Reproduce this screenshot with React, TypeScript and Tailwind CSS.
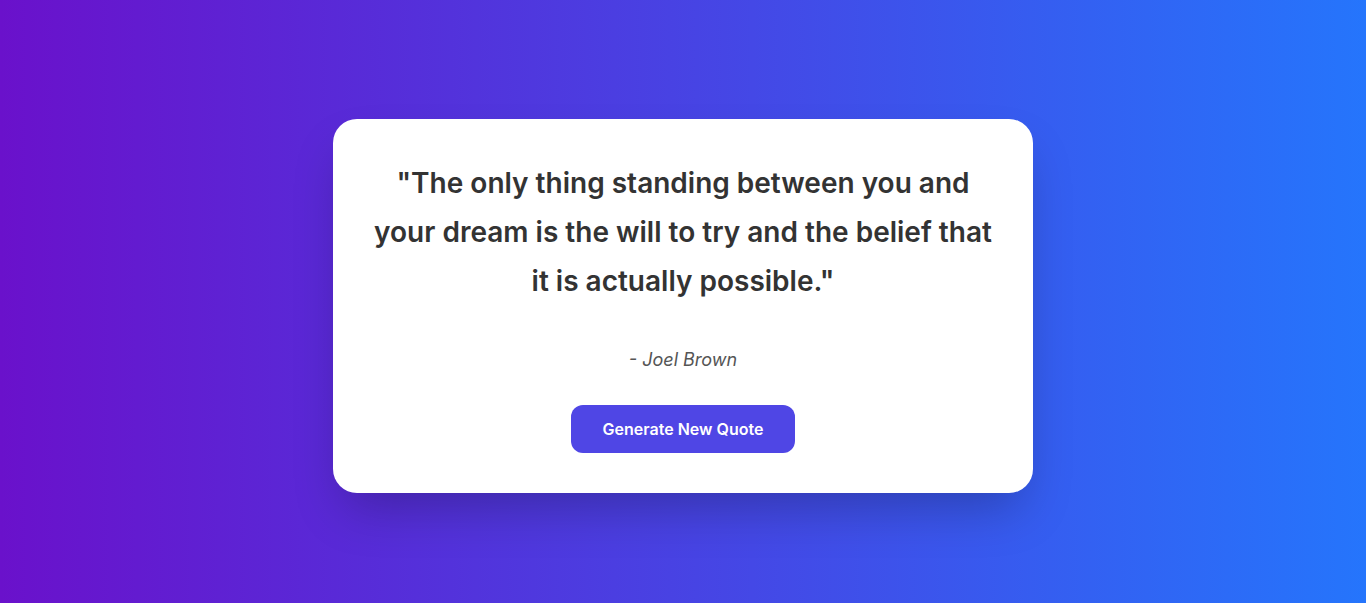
export default function App() {
  return (
    <div className="min-h-screen w-full flex items-center justify-center pt-[8px] bg-[linear-gradient(to_right,#6a11cb,#2575fc)] font-['Inter','Noto_Sans',sans-serif]">
      <div className="w-[700px] bg-white rounded-3xl shadow-2xl px-10 pt-10 pb-10 flex flex-col items-center text-center">
        <p className="text-[28px] leading-[49px] font-semibold text-[#333333]">
          "The only thing standing between you and your dream is the will to try and the belief that it is actually possible."
        </p>
        <p className="mt-10 text-lg italic text-[#555555]">- Joel Brown</p>
        <button className="mt-[31px] px-8 py-3 rounded-xl bg-[#4f46e5] text-white font-semibold text-base">
          Generate New Quote
        </button>
      </div>
    </div>
  );
}
